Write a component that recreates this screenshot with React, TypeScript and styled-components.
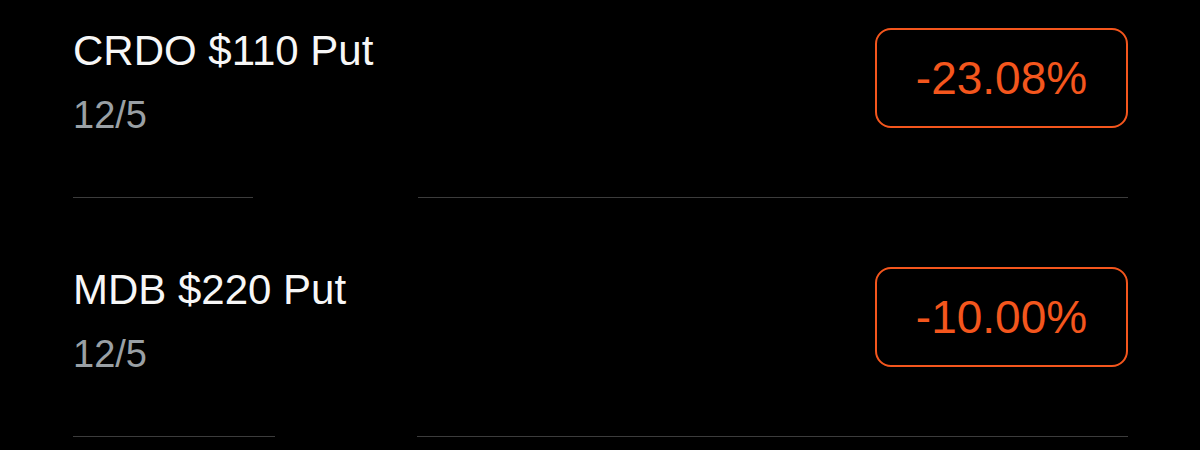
import styled, { createGlobalStyle } from 'styled-components';

const GlobalStyle = createGlobalStyle`
  html, body {
    margin: 0;
    padding: 0;
    background: #000;
  }
  body {
    font-family: "Liberation Sans", Arial, sans-serif;
    -webkit-font-smoothing: antialiased;
  }
`;

const Page = styled.div`
  width: 1200px;
  height: 450px;
  background: #000;
  overflow: hidden;
`;

const List = styled.div`
  display: flex;
  flex-direction: column;
  margin-top: -41px;
`;

const Row = styled.div`
  display: flex;
  flex-direction: column;
  padding: 0 72px 0 73px;
`;

const RowMain = styled.div`
  height: 238px;
  display: flex;
  align-items: center;
  justify-content: space-between;
`;

const Info = styled.div`
  display: flex;
  flex-direction: column;
  gap: 18px;
  padding-top: 8px;
`;

const Title = styled.div`
  font-size: 42px;
  line-height: 48px;
  color: #f7f7f7;
  white-space: nowrap;
`;

const Expiry = styled.div`
  font-size: 38px;
  line-height: 44px;
  color: #9aa0a5;
`;

const ChangeBadge = styled.div`
  width: 253px;
  height: 100px;
  box-sizing: border-box;
  border: 2px solid #f4561d;
  border-radius: 16px;
  display: flex;
  align-items: center;
  justify-content: center;
  font-size: 46px;
  color: #f4561d;
`;

// the separator in the shot is broken where something was painted over
const Divider = styled.div<{ $gapFrom: number; $gapTo: number }>`
  height: 1px;
  background: ${(p) =>
    `linear-gradient(to right, #3c3c3c 0 ${p.$gapFrom}px, transparent ${p.$gapFrom}px ${p.$gapTo}px, #3c3c3c ${p.$gapTo}px)`};
`;

type Position = {
  id: string;
  title: string;
  expiry: string;
  change: string;
  gap: [number, number];
};

const positions: Position[] = [
  { id: 'crdo', title: 'CRDO $110 Put', expiry: '12/5', change: '-23.08%', gap: [180, 345] },
  { id: 'mdb', title: 'MDB $220 Put', expiry: '12/5', change: '-10.00%', gap: [202, 344] },
];

function PositionRow({ item }: { item: Position }) {
  return (
    <Row>
      <RowMain>
        <Info>
          <Title>{item.title}</Title>
          <Expiry>{item.expiry}</Expiry>
        </Info>
        <ChangeBadge>{item.change}</ChangeBadge>
      </RowMain>
      <Divider $gapFrom={item.gap[0]} $gapTo={item.gap[1]} />
    </Row>
  );
}

export default function App() {
  return (
    <Page>
      <GlobalStyle />
      <List>
        {positions.map((p) => (
          <PositionRow key={p.id} item={p} />
        ))}
      </List>
    </Page>
  );
}
